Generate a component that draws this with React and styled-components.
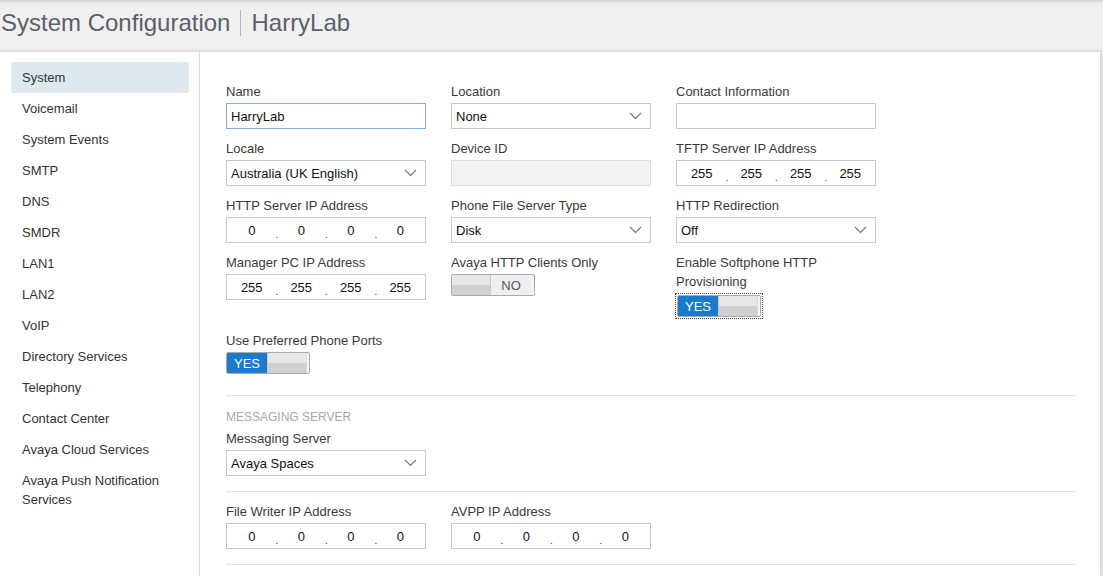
import React from 'react'
import styled, { createGlobalStyle } from 'styled-components'

const GlobalStyle = createGlobalStyle`
  html, body {
    margin: 0;
    padding: 0;
    background: #f0f0f0;
    font-family: "Liberation Sans", Arial, sans-serif;
    overflow: hidden;
  }
`

const Page = styled.div`
  width: 1103px;
  height: 576px;
  display: flex;
  flex-direction: column;
  box-shadow: inset 0 4px 4px -3px rgba(0, 0, 0, 0.18);
`

const Header = styled.div`
  height: 51px;
  display: flex;
  align-items: center;
  padding-left: 1px;
  padding-bottom: 6px;
  box-sizing: border-box;
  color: #5b6068;
  font-size: 24px;
`

const Divider = styled.span`
  width: 1px;
  height: 26px;
  background: #b5b5b5;
  margin: 0 10px 0 10px;
`

const Panel = styled.div`
  flex: 1;
  width: 1100px;
  display: flex;
  background: #fff;
  border-top: 1px solid #e0e0e0;
  box-shadow: 1px 0 3px rgba(0, 0, 0, 0.18);
`

const Sidebar = styled.div`
  width: 200px;
  flex-shrink: 0;
  border-right: 1px solid #dcdcdc;
  padding: 10px 10px 0 11px;
  box-sizing: border-box;
  display: flex;
  flex-direction: column;
`

const NavItem = styled.div`
  padding: 6px 8px 6px 11px;
  line-height: 19px;
  font-size: 13px;
  color: #333;
  border-radius: 3px;
  background: ${p => (p.$active ? '#dde9ef' : 'transparent')};
`

const Content = styled.div`
  flex: 1;
  padding: 30px 24px 0 26px;
  display: flex;
  flex-direction: column;
`

const Grid = styled.div`
  display: grid;
  grid-template-columns: repeat(3, 200px);
  column-gap: 25px;
  row-gap: 10px;
  align-items: start;
`

const Field = styled.div`
  display: flex;
  flex-direction: column;
  align-items: flex-start;
`

const Label = styled.div`
  font-size: 13px;
  line-height: 19px;
  color: #3a3a3a;
  margin-bottom: 2px;
  width: 160px;
`

const Box = styled.div`
  width: 200px;
  height: 26px;
  box-sizing: border-box;
  border: 1px solid;
  background: ${p => (p.$disabled ? '#f2f2f2' : '#fff')};
  border-color: ${p => (p.$disabled ? '#dedede' : p.$focus ? '#7cb2e4' : '#c8c8c8')};
  display: flex;
  align-items: center;
  padding: 0 4px;
  font-size: 13px;
  color: #111;
`

const SelectBox = styled(Box)`
  justify-content: space-between;
  padding-right: 8px;
`

const IpBox = styled(Box)`
  padding: 0;
`

const Octet = styled.span`
  flex: 1;
  text-align: center;
`

const Dot = styled.span`
  width: 0;
  position: relative;
  top: 4px;
  left: -1px;
  font-size: 10px;
  color: #333;
`

const Focus = styled.div`
  border: 1px dotted #444;
  padding: 1px;
  margin: 0 0 2px -1px;
`

const Switch = styled.div`
  width: 84px;
  height: 22px;
  box-sizing: border-box;
  border: 1px solid #aaa;
  border-radius: 2px;
  overflow: hidden;
  display: flex;
  background: #f4f5f5;
`

const Side = styled.div`
  width: 40px;
  flex-shrink: 0;
  display: flex;
  align-items: center;
  justify-content: center;
  font-size: 13px;
  color: ${p => (p.$on ? '#fff' : '#555')};
  background: ${p => (p.$on ? '#1a7bcc' : '#eef0f0')};
`

const Knob = styled.div`
  width: 38px;
  flex-shrink: 0;
  border-left: ${p => (p.$left ? 'none' : '1px solid #c8c8c8')};
  border-right: ${p => (p.$left ? '1px solid #c8c8c8' : '1px solid #dadada')};
  background: linear-gradient(#e6e7e9 0 50%, #cfd0d3 50% 100%);
`

const Rule = styled.div`
  border-top: 1px solid #e3e3e3;
  margin: ${p => p.$m || '20px 0 0'};
`

const SectionTitle = styled.div`
  font-size: 12px;
  color: #a8a8a8;
  line-height: 19px;
  margin-top: 12px;
`

const Row = styled.div`
  display: flex;
  gap: 25px;
  margin-top: ${p => p.$mt || '0'};
`

const Chevron = () => (
  <svg width="13" height="8" viewBox="0 0 13 8">
    <path d="M1 1 L6.5 6.5 L12 1" fill="none" stroke="#777" strokeWidth="1.1" />
  </svg>
)

const Select = ({ value }) => (
  <SelectBox>
    <span>{value}</span>
    <Chevron />
  </SelectBox>
)

const Ip = ({ parts }) => (
  <IpBox>
    {parts.map((p, i) => (
      <React.Fragment key={i}>
        {i > 0 && <Dot>.</Dot>}
        <Octet>{p}</Octet>
      </React.Fragment>
    ))}
  </IpBox>
)

const Toggle = ({ on }) => (
  <Switch>
    {on ? (
      <>
        <Side $on>YES</Side>
        <Knob />
      </>
    ) : (
      <>
        <Knob $left />
        <Side>NO</Side>
      </>
    )}
  </Switch>
)

const nav = [
  'System', 'Voicemail', 'System Events', 'SMTP', 'DNS', 'SMDR', 'LAN1', 'LAN2',
  'VoIP', 'Directory Services', 'Telephony', 'Contact Center', 'Avaya Cloud Services',
  'Avaya Push Notification Services',
]

const zeros = ['0', '0', '0', '0']
const full = ['255', '255', '255', '255']

export default function App() {
  return (
    <Page>
      <GlobalStyle />
      <Header>
        System Configuration<Divider />HarryLab
      </Header>
      <Panel>
        <Sidebar>
          {nav.map((n, i) => (
            <NavItem key={n} $active={i === 0}>{n}</NavItem>
          ))}
        </Sidebar>
        <Content>
          <Grid>
            <Field>
              <Label>Name</Label>
              <Box $focus>HarryLab</Box>
            </Field>
            <Field>
              <Label>Location</Label>
              <Select value="None" />
            </Field>
            <Field>
              <Label>Contact Information</Label>
              <Box />
            </Field>

            <Field>
              <Label>Locale</Label>
              <Select value="Australia (UK English)" />
            </Field>
            <Field>
              <Label>Device ID</Label>
              <Box $disabled />
            </Field>
            <Field>
              <Label>TFTP Server IP Address</Label>
              <Ip parts={full} />
            </Field>

            <Field>
              <Label>HTTP Server IP Address</Label>
              <Ip parts={zeros} />
            </Field>
            <Field>
              <Label>Phone File Server Type</Label>
              <Select value="Disk" />
            </Field>
            <Field>
              <Label>HTTP Redirection</Label>
              <Select value="Off" />
            </Field>

            <Field>
              <Label>Manager PC IP Address</Label>
              <Ip parts={full} />
            </Field>
            <Field>
              <Label>Avaya HTTP Clients Only</Label>
              <Toggle on={false} />
            </Field>
            <Field>
              <Label>Enable Softphone HTTP Provisioning</Label>
              <Focus>
                <Toggle on />
              </Focus>
            </Field>

            <Field>
              <Label>Use Preferred Phone Ports</Label>
              <Toggle on />
            </Field>
          </Grid>

          <Rule $m="21px 0 0" />
          <SectionTitle>MESSAGING SERVER</SectionTitle>
          <Row $mt="2px">
            <Field>
              <Label>Messaging Server</Label>
              <Select value="Avaya Spaces" />
            </Field>
          </Row>
          <Rule $m="15px 0 0" />
          <Row $mt="10px">
            <Field>
              <Label>File Writer IP Address</Label>
              <Ip parts={zeros} />
            </Field>
            <Field>
              <Label>AVPP IP Address</Label>
              <Ip parts={zeros} />
            </Field>
          </Row>
          <Rule $m="15px 0 0" />
        </Content>
      </Panel>
    </Page>
  )
}
